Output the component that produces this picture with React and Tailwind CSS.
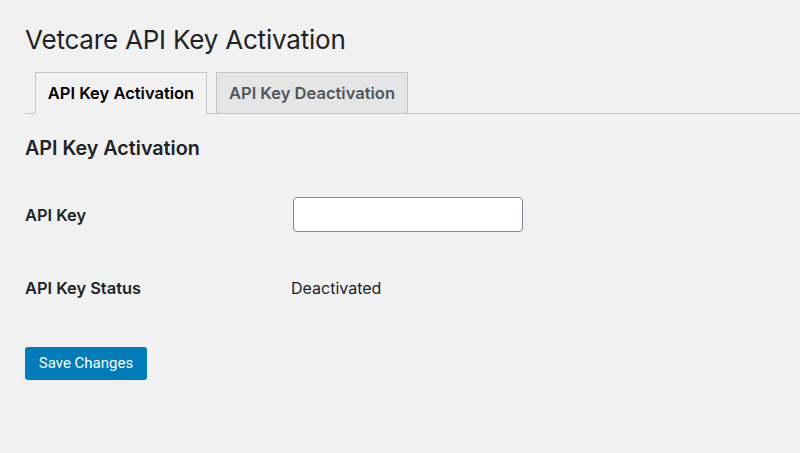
export default function App() {
  return (
    <div className="w-[800px] h-[453px] bg-[#f1f1f1] overflow-hidden" style={{ fontFamily: "Inter, 'Liberation Sans', sans-serif" }}>
      <div className="pl-[25px] pt-[24px]">
        <h1 className="text-[26px] leading-[32px] text-[#1d2327] font-normal tracking-[-0.2px]">Vetcare API Key Activation</h1>
        <div className="mt-[16px] flex items-end border-b border-[#c3c4c7] pl-[10px] h-[42px]">
          <div className="h-[42px] w-[172px] border border-b-0 border-[#c3c4c7] bg-[#f1f1f1] -mb-px flex items-center justify-center text-[16.5px] font-semibold text-[#000]">API Key Activation</div>
          <div className="ml-[9px] h-[41px] w-[192px] border border-b-0 border-[#c3c4c7] bg-[#e5e5e5] flex items-center justify-center text-[16.5px] font-semibold text-[#50575e]">API Key Deactivation</div>
        </div>
        <h2 className="mt-[22px] text-[19.7px] leading-[24px] font-semibold text-[#1d2327]">API Key Activation</h2>
        <div className="mt-[37px] flex items-center h-[36px]">
          <div className="w-[268px] text-[16.4px] font-semibold text-[#1d2327]">API Key</div>
          <input type="text" className="w-[230px] h-[35px] -mt-[2px] bg-white border border-[#7e8993] rounded-[4px] outline-none" />
        </div>
        <div className="mt-[37px] flex items-center h-[36px]">
          <div className="w-[266px] text-[16.4px] font-semibold text-[#1d2327]">API Key Status</div>
          <div className="text-[16px] text-[#1d2327]">Deactivated</div>
        </div>
        <button className="mt-[41px] w-[122px] h-[33px] bg-[#007cba] rounded-[3px] text-white text-[15px] flex items-center justify-center" style={{ fontFamily: "Roboto, 'Liberation Sans', sans-serif" }}>Save Changes</button>
      </div>
    </div>
  );
}
